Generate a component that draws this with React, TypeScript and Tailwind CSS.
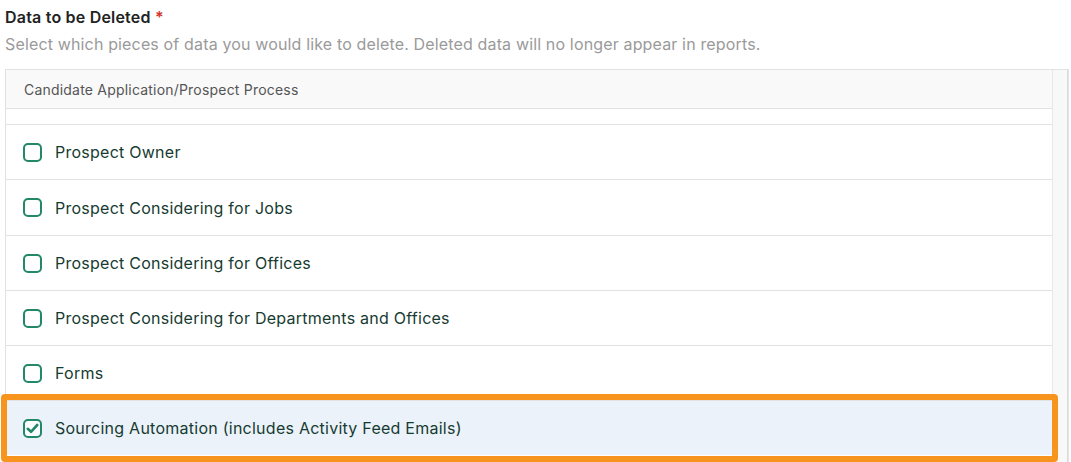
import React from "react";

const items: [string, string][] = [
  ["Prospect Owner", "h-[55px]"],
  ["Prospect Considering for Jobs", "h-[56px]"],
  ["Prospect Considering for Offices", "h-[55px]"],
  ["Prospect Considering for Departments and Offices", "h-[55px]"],
  ["Forms", "h-[55px]"],
];

function Box({ checked }: { checked?: boolean }) {
  return (
    <span className="flex h-[19px] w-[19px] shrink-0 items-center justify-center rounded-[5px] border-2 border-[#23886a] bg-white">
      {checked && (
        <svg width="13" height="13" viewBox="0 0 13 13" fill="none">
          <path d="M1.8 6.8 L5 9.8 L11.2 3" stroke="#23886a" strokeWidth="2.6" strokeLinecap="round" strokeLinejoin="round" />
        </svg>
      )}
    </span>
  );
}

export default function App() {
  return (
    <div className="h-[462px] w-[1071px] overflow-hidden bg-white pl-[5px] pt-[5px] tracking-[0.2px]" style={{ fontFamily: "Inter, 'Noto Sans', sans-serif" }}>
      <div className="text-[16px] leading-[24px] font-semibold text-[#222]">
        Data to be Deleted <span className="text-[#d0342c]">*</span>
      </div>
      <div className="mt-[3px] text-[16px] leading-[24px] text-[#9a9a9a] tracking-[0.15px]">
        Select which pieces of data you would like to delete. Deleted data will no longer appear in reports.
      </div>
      <div className="mt-[13px] flex h-[420px] w-[1064px] border border-[#e2e2e2]">
        <div className="flex w-[1047px] flex-col">
          <div className="flex h-[39px] shrink-0 items-center border-b border-[#e2e2e2] bg-[#f9f9f9] pl-[18px] text-[14px] text-[#555]">
            Candidate Application/Prospect Process
          </div>
          <div className="h-[16px] shrink-0 border-b border-[#e2e2e2]" />
          {items.map(([t, h]) => (
            <div key={t} className={`flex ${h} shrink-0 items-center gap-[13px] border-b border-[#e2e2e2] pl-[17px] text-[16px] text-[#173b31] tracking-[0.25px]`}>
              <Box />
              <span>{t}</span>
            </div>
          ))}
          <div className="relative flex h-[54px] shrink-0 items-center gap-[13px] bg-[#ebf2fa] pl-[17px] text-[16px] text-[#173b31] tracking-[0.25px]">
            <Box checked />
            <span>Sourcing Automation (includes Activity Feed Emails)</span>
            <div className="absolute -left-[5px] -right-[6px] -top-[7px] -bottom-[7px] rounded-[4px] border-[6px] border-[#f7941d]" />
          </div>
        </div>
        <div className="w-[16px] border-l border-r border-l-[#e8e8e8] border-r-[#dcdcdc] bg-[#f8f8f8]" />
      </div>
    </div>
  );
}
